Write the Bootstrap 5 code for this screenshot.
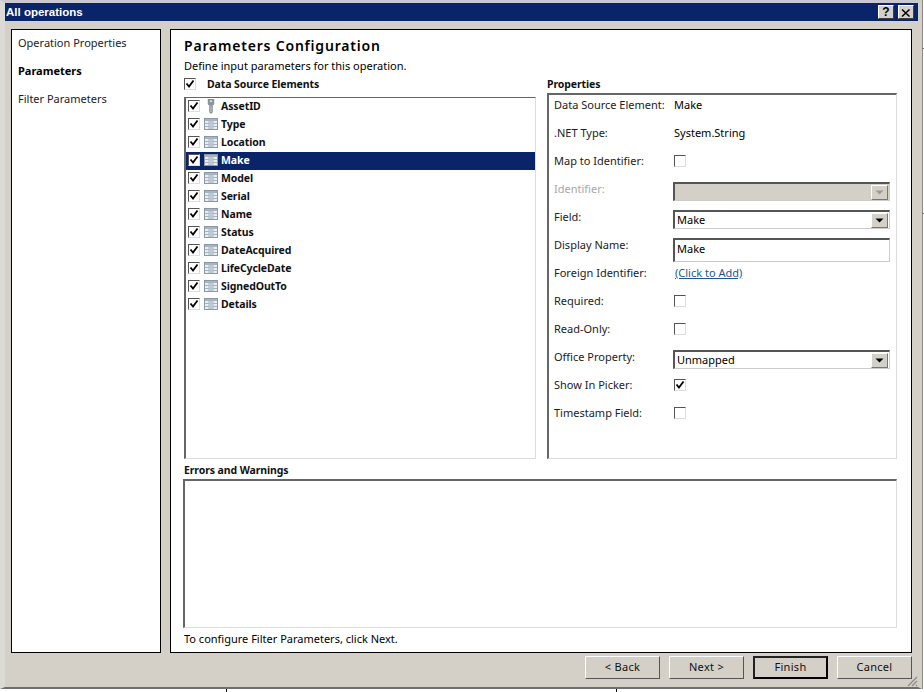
<!DOCTYPE html>
<html lang="en">
<head>
    <meta charset="UTF-8">
    <title>All operations</title>
    <link href="https://cdn.jsdelivr.net/npm/bootstrap@5.3.2/dist/css/bootstrap.min.css" rel="stylesheet">
    <style>
        html, body { height: 100%; overflow: hidden; }
        body {
            background: #fff;
            color: #000;
            font-family: "Noto Sans", "Open Sans", sans-serif;
            font-size: 11px;
            line-height: 14px;
        }
        .dlg-window {
            width: 922px;
            height: 689px;
            background: #d4d0c8;
            border-right: 4px solid #d4d0c8;
            border-bottom: 2px solid #6e6e6c;
            border-top: 3px solid #c9c8d0;
            border-left: 5px solid #dcdad4;
            box-shadow: 1px 0 0 #8a8a88;
        }
        .dlg-title {
            height: 18px;
            flex: none;
            background: #0a246a;
            color: #fff;
            font-family: "Liberation Sans", sans-serif;
            font-size: 11.5px;
            font-weight: bold;
            padding-left: 1px;
        }
        .cap-btn {
            width: 16px;
            height: 14px;
            background: #d4d0c8;
            border: 1px solid;
            border-color: #fff #404040 #404040 #fff;
            color: #000;
            font-weight: bold;
            font-size: 12px;
            line-height: 12px;
            text-align: center;
        }
        .dlg-body { padding: 8px 6px 0 6px; gap: 9px; height: 632px; flex: none; }
        .side-pane, .main-pane { background: #fff; border: 1px solid #000; }
        .side-pane { width: 150px; padding: 6px 6px; }
        .side-item { height: 28px; color: #222; font-size: 11px; }
        .side-item.is-on { color: #000; font-weight: bold; }
        .main-pane { width: 742px; padding: 6px 0 0 13px; }
        .page-head { font-size: 14px; font-weight: 600; letter-spacing: .8px; line-height: 20px; }
        .page-sub { line-height: 14px; margin-top: 3px; height: 14px; }
        .sect-label { font-weight: 700; font-size: 10.5px; letter-spacing: -.1px; color: #111; }
        .sect-label.tree-head { margin-left: 11px; }
        .sunk-box {
            background: #fff;
            border-style: solid;
            border-color: #666 #ddd #ddd #666;
            border-width: 2px 1px 1px 2px;
        }
        .tree-col { width: 352px; }
        .props-col { width: 350px; margin-left: 11px; }
        .tree-box { height: 362px; padding: 0; margin-top: 6px; border-top-width: 1px; }
        .tree-row {
            height: 18px;
            padding: 0 0 2px 2px;
            font-weight: 700;
            font-size: 10.5px;
            letter-spacing: -.1px;
            color: #111;
        }
        .tree-row.is-sel { background: #0a246a; color: #fff; }
        .tree-row .tree-ico { margin: 0 3px 0 4px; flex: none; }
        .chk {
            width: 12px;
            height: 12px;
            flex: none;
            background: #fff;
            border: 1px solid;
            border-color: #555 #ddd #ddd #555;
            display: inline-flex;
            align-items: center;
            justify-content: center;
        }
        .props-box { height: 366px; padding: 0 5px; margin-top: 2px; }
        .prop-row { height: 28px; }
        .prop-name { width: 120px; flex: none; color: #222; padding-top: 3px; }
        .prop-name.is-off { color: #a8a8a8; }
        .prop-val { padding-top: 3px; }
        .prop-row .chk { margin-top: 4px; }
        .combo {
            width: 217px;
            height: 19px;
            margin: 3px 0 0 -1px;
            background: #fff;
            border-style: solid;
            border-width: 2px 1px 1px 2px;
            border-color: #555 #ccc #ccc #555;
            padding-left: 2px;
        }
        .combo.is-off { background: #d4d0c8; }
        .combo-arrow {
            width: 17px;
            height: 15px;
            margin: 0 1px 0 auto;
            background: #d4d0c8;
            border: 1px solid;
            border-color: #fff #777 #777 #fff;
        }
        .text-field { height: 24px; padding-top: 2px; }
        .link-add { color: #1c5a8c; text-decoration: underline; padding: 3px 0 0 1px; }
        .err-head { margin-top: 4px; }
        .err-box { width: 714px; height: 149px; margin: 2px 0 0 -1px; }
        .foot-note { margin-top: 4px; }
        .dlg-foot { padding: 3px 6px 0 0; gap: 9px; position: relative; flex: 1 1 auto; }
        .wiz-btn {
            width: 75px;
            height: 23px;
            padding: 0;
            border-radius: 0;
            background: #d4d0c8;
            color: #111;
            font-size: 11px;
            border: 1px solid;
            border-color: #fff #555 #555 #fff;
            letter-spacing: .3px;
        }
        .wiz-btn.is-default { border: 2px solid #000; border-color: #222 #000 #000 #222; }
        .size-grip { position: absolute; right: 0; bottom: 0; }
        .bg-tick { position: absolute; background: #000; width: 1px; height: 3px; top: 689px; }
        .bg-dash { position: absolute; background: #777; width: 2px; height: 1px; left: 922px; }
    </style>
</head>
<body>
    <div class="dlg-window d-flex flex-column">
        <div class="dlg-title d-flex align-items-center">
            <span class="flex-grow-1">All operations</span>
            <span class="cap-btn me-1">?</span>
            <span class="cap-btn me-1">
                <svg width="10" height="10" viewBox="0 0 10 10"><path d="M1 1.5l7.5 7M8.5 1.5l-7.5 7" stroke="#000" stroke-width="1.6"/></svg>
            </span>
        </div>

        <div class="dlg-body d-flex">
            <div class="side-pane">
                <div class="side-item">Operation Properties</div>
                <div class="side-item is-on">Parameters</div>
                <div class="side-item">Filter Parameters</div>
            </div>

            <div class="main-pane">
                <div class="page-head">Parameters Configuration</div>
                <div class="page-sub">Define input parameters for this operation.</div>

                <div class="d-flex mt-1">
                    <div class="tree-col">
                        <div class="d-flex align-items-center">
                            <span class="chk"><svg width="10" height="10" viewBox="0 0 10 10"><path d="M1.5 4.5l2.5 3 4.5-6" fill="none" stroke="#000" stroke-width="1.8"/></svg></span>
                            <span class="sect-label tree-head">Data Source Elements</span>
                        </div>
                        <div class="sunk-box tree-box" id="treeBox"></div>
                    </div>
                    <div class="props-col">
                        <div class="sect-label">Properties</div>
                        <div class="sunk-box props-box" id="propsBox"></div>
                    </div>
                </div>

                <div class="sect-label err-head">Errors and Warnings</div>
                <div class="sunk-box err-box"></div>
                <div class="foot-note">To configure Filter Parameters, click Next.</div>
            </div>
        </div>

        <div class="dlg-foot d-flex justify-content-end">
            <button type="button" class="btn wiz-btn">&lt; Back</button>
            <button type="button" class="btn wiz-btn">Next &gt;</button>
            <button type="button" class="btn wiz-btn is-default">Finish</button>
            <button type="button" class="btn wiz-btn">Cancel</button>
            <svg class="size-grip" width="12" height="12" viewBox="0 0 12 12"><path d="M11 2L2 11M11 6l-5 5M11 10l-1 1" stroke="#8a8a88" stroke-width="1.2"/></svg>
        </div>
    </div>
    <span class="bg-tick" style="left:226px"></span>
    <span class="bg-tick" style="left:616px"></span>
    <span class="bg-dash" style="top:48px"></span>
    <span class="bg-dash" style="top:213px"></span>

    <script>
        const check = '<svg width="10" height="10" viewBox="0 0 10 10"><path d="M1.5 4.5l2.5 3 4.5-6" fill="none" stroke="#000" stroke-width="1.8"/></svg>';
        const arrow = c => `<svg width="15" height="13" viewBox="0 0 15 13"><path d="M3.5 4.5h8l-4 4z" fill="${c}"/></svg>`;
        const tableIcon = '<svg class="tree-ico" width="14" height="14" viewBox="0 0 14 14"><rect x=".5" y="1.5" width="13" height="11" fill="#e8edf2" stroke="#8c98a4"/><path d="M1 2h12v2H1z" fill="#aab4be"/><path d="M5 2v10M9 2v10M1 6.500h12M1 9.500h12" stroke="#a8b4c0"/><path d="M5.500 4h3v8h-3z" fill="#b8c8d8"/></svg>';
        const keyIcon = '<svg class="tree-ico" width="14" height="15" viewBox="0 0 14 16"><path d="M4 0h6v5.500l-1.500 1.500v7l-1.500 1.500-1.500-1.500v-7L4 5.500z" fill="#8c969c" stroke="#6e777c" stroke-width=".6"/><path d="M6 1.500h2v1.500H6z" fill="#fff"/><path d="M7 7v7" stroke="#c8d0d4"/></svg>';

        // tree rows
        const fields = ['AssetID', 'Type', 'Location', 'Make', 'Model', 'Serial', 'Name', 'Status', 'DateAcquired', 'LifeCycleDate', 'SignedOutTo', 'Details'];
        document.getElementById('treeBox').innerHTML = fields.map((name, i) =>
            `<div class="tree-row d-flex align-items-center${name === 'Make' ? ' is-sel' : ''}">
                <span class="chk">${check}</span>${i === 0 ? keyIcon : tableIcon}<span>${name}</span>
            </div>`).join('');

        // property grid
        const combo = (text, off) => `<div class="combo d-flex align-items-center${off ? ' is-off' : ''}"><span>${text}</span><span class="combo-arrow d-flex">${arrow(off ? '#999' : '#000')}</span></div>`;
        const props = [
            ['Data Source Element:', '<span class="prop-val">Make</span>'],
            ['.NET Type:', '<span class="prop-val">System.String</span>'],
            ['Map to Identifier:', '<span class="chk"></span>'],
            ['Identifier:', combo('', true), true],
            ['Field:', combo('Make')],
            ['Display Name:', '<div class="combo text-field">Make</div>'],
            ['Foreign Identifier:', '<span class="link-add">(Click to Add)</span>'],
            ['Required:', '<span class="chk"></span>'],
            ['Read-Only:', '<span class="chk"></span>'],
            ['Office Property:', combo('Unmapped')],
            ['Show In Picker:', `<span class="chk">${check}</span>`],
            ['Timestamp Field:', '<span class="chk"></span>']
        ];
        document.getElementById('propsBox').innerHTML = props.map(p =>
            `<div class="prop-row d-flex align-items-start"><span class="prop-name${p[2] ? ' is-off' : ''}">${p[0]}</span>${p[1]}</div>`).join('');
    </script>
</body>
</html>
